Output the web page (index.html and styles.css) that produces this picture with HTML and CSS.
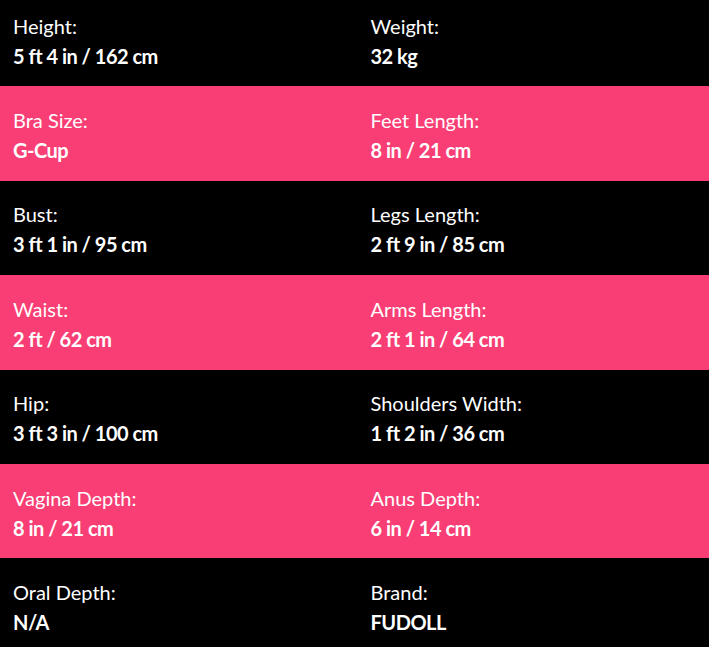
FILE: index.html
```html
<!DOCTYPE html>
<html>
<head>
<meta charset="utf-8">
<link rel="stylesheet" href="styles.css">
</head>
<body>
<div class="specs">
  <div class="row dark">
    <div class="cell"><div class="label">Height:</div><div class="value">5 ft 4 in / 162 cm</div></div>
    <div class="cell"><div class="label">Weight:</div><div class="value">32 kg</div></div>
  </div>
  <div class="row pink">
    <div class="cell"><div class="label">Bra Size:</div><div class="value">G-Cup</div></div>
    <div class="cell"><div class="label">Feet Length:</div><div class="value">8 in / 21 cm</div></div>
  </div>
  <div class="row dark">
    <div class="cell"><div class="label">Bust:</div><div class="value">3 ft 1 in / 95 cm</div></div>
    <div class="cell"><div class="label">Legs Length:</div><div class="value">2 ft 9 in / 85 cm</div></div>
  </div>
  <div class="row pink">
    <div class="cell"><div class="label">Waist:</div><div class="value">2 ft / 62 cm</div></div>
    <div class="cell"><div class="label">Arms Length:</div><div class="value">2 ft 1 in / 64 cm</div></div>
  </div>
  <div class="row dark">
    <div class="cell"><div class="label">Hip:</div><div class="value">3 ft 3 in / 100 cm</div></div>
    <div class="cell"><div class="label">Shoulders Width:</div><div class="value">1 ft 2 in / 36 cm</div></div>
  </div>
  <div class="row pink">
    <div class="cell"><div class="label">Vagina Depth:</div><div class="value">8 in / 21 cm</div></div>
    <div class="cell"><div class="label">Anus Depth:</div><div class="value">6 in / 14 cm</div></div>
  </div>
  <div class="row dark">
    <div class="cell"><div class="label">Oral Depth:</div><div class="value">N/A</div></div>
    <div class="cell"><div class="label">Brand:</div><div class="value">FUDOLL</div></div>
  </div>
</div>
</body>
</html>
```
FILE: styles.css
```css
html, body {
  margin: 0;
  padding: 0;
  background: #000;
  overflow: hidden;
}
body {
  font-family: Lato, "Open Sans", sans-serif;
  color: #fff;
}
.specs {
  margin-top: -8px;
}
.row {
  height: 94.4px;
  box-sizing: border-box;
  padding: 18.6px 13px 0;
  display: grid;
  grid-template-columns: 1fr 1fr;
  column-gap: 32px;
  align-content: start;
}
.dark { background: #000; }
.pink { background: #f83e74; }
.label {
  font-size: 20px;
  line-height: 30px;
  font-weight: 400;
}
.value {
  font-size: 20px;
  line-height: 30px;
  font-weight: 700;
  letter-spacing: -0.5px;
}
```
